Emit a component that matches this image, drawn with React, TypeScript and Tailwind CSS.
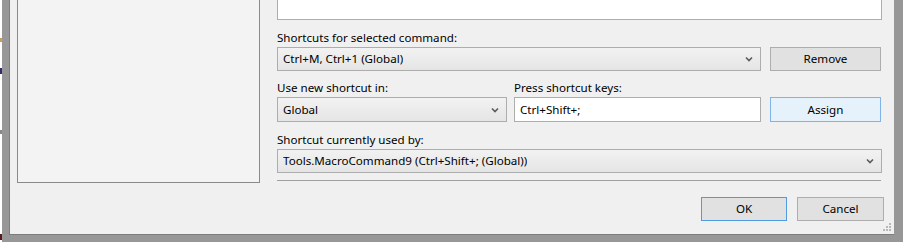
import React from "react";

const font = { fontFamily: '"Segoe UI", "Noto Sans", "Open Sans", sans-serif' };

function Chevron() {
  return (
    <svg width="8" height="6" viewBox="0 0 8 6" className="shrink-0">
      <path d="M1 1.5 L4 4.5 L7 1.5" fill="none" stroke="#5a5a5a" strokeWidth="1.6" />
    </svg>
  );
}

function Combo({ text, className }: { text: string; className: string }) {
  return (
    <div
      className={`flex items-center justify-between h-[24px] border border-[#adadad] bg-gradient-to-b from-[#f2f2f2] to-[#e5e5e5] pl-[5px] pr-[7px] ${className}`}
    >
      <span className="truncate">{text}</span>
      <Chevron />
    </div>
  );
}

function Btn({ text, blue, className }: { text: string; blue?: boolean; className: string }) {
  return (
    <div
      className={`flex items-center justify-center h-[24px] border ${
        blue ? "border-[#7eb4ea] bg-[#e5f1fb]" : "border-[#adadad] bg-[#e1e1e1]"
      } ${className}`}
    >
      {text}
    </div>
  );
}

export default function App() {
  return (
    <div className="w-[905px] h-[245px] bg-white overflow-hidden relative" style={font}>
      <div className="absolute left-0 top-[38px] w-[2px] h-[4px] bg-[#c8a060]" />
      <div className="absolute left-0 top-[68px] w-[2px] h-[6px] bg-[#3a2a6a]" />
      <div className="absolute left-0 top-[130px] w-[2px] h-[4px] bg-[#888]" />
      <div className="absolute left-0 top-[234px] w-[2px] h-[6px] bg-[#5a1a1a]" />
      <div className="ml-[2px] w-[901px] h-[242px] border-l-[7px] border-r-[9px] border-b-[7px] border-[#979797]">
        <div className="w-full h-full bg-[#f0f0f0] border-l border-b border-[#7d7d7d] flex text-[11.6px] text-black relative">
          <div className="ml-[7px] w-[243px] h-[183px] border border-t-0 border-[#8a8a8a] bg-[#f3f3f3]" />
          <div className="ml-[17px] w-[605px] flex flex-col">
            <div className="h-[20px] border border-t-0 border-[#adadad] bg-white" />
            <div className="mt-[10px] h-[16px] leading-[16px]">Shortcuts for selected command:</div>
            <div className="mt-[1px] flex">
              <Combo text="Ctrl+M, Ctrl+1 (Global)" className="w-[484px]" />
              <Btn text="Remove" className="ml-[9px] w-[111px]" />
            </div>
            <div className="mt-[9px] h-[16px] leading-[16px] flex">
              <span className="w-[237px]">Use new shortcut in:</span>
              <span>Press shortcut keys:</span>
            </div>
            <div className="mt-[1px] flex">
              <Combo text="Global" className="w-[230px] h-[25px]" />
              <div className="ml-[7px] w-[247px] h-[25px] border border-[#adadad] bg-white flex items-center pl-[5px]">
                Ctrl+Shift+;
              </div>
              <Btn text="Assign" blue className="ml-[9px] w-[111px] h-[25px]" />
            </div>
            <div className="mt-[10px] h-[16px] leading-[16px]">Shortcut currently used by:</div>
            <div className="mt-[1px] flex">
              <Combo text="Tools.MacroCommand9 (Ctrl+Shift+; (Global))" className="w-[605px]" />
            </div>
            <div className="mt-[7px] h-[1px] w-[604px] bg-[#a0a0a0]" />
            <div className="mt-[16px] flex justify-end">
              <Btn text="OK" className="w-[86px] !border-[#4f9ae0] !bg-[#e1e1e1]" />
              <Btn text="Cancel" className="ml-[10px] w-[87px] -mr-[2px]" />
            </div>
          </div>
          <svg className="absolute right-[3px] bottom-[3px]" width="8" height="8" viewBox="0 0 8 8">
            <g fill="#b8b8b8">
              <rect x="6" y="0" width="2" height="2" />
              <rect x="3" y="3" width="2" height="2" />
              <rect x="6" y="3" width="2" height="2" />
              <rect x="0" y="6" width="2" height="2" />
              <rect x="3" y="6" width="2" height="2" />
              <rect x="6" y="6" width="2" height="2" />
            </g>
          </svg>
        </div>
      </div>
    </div>
  );
}
